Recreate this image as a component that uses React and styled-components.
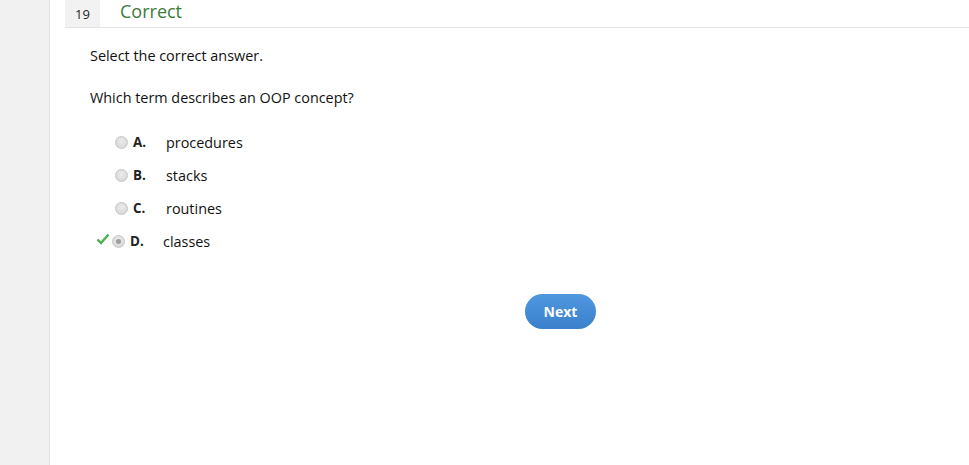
import styled, { createGlobalStyle } from "styled-components";

const Global = createGlobalStyle`
  html, body {
    margin: 0;
    padding: 0;
    background: #fff;
    font-family: "Open Sans", "Noto Sans", sans-serif;
    color: #111;
  }
`;

const Page = styled.div`
  display: flex;
  width: 969px;
  height: 465px;
  overflow: hidden;
`;

const Sidebar = styled.div`
  width: 49px;
  flex-shrink: 0;
  background: #f1f1f1;
  border-right: 1px solid #e2e2e2;
`;

const Main = styled.div`
  flex: 1;
  padding-left: 15px;
`;

const Header = styled.div`
  display: flex;
  align-items: center;
  height: 27px;
  border-bottom: 1px solid #e4e4e4;
`;

const Number = styled.div`
  width: 35px;
  height: 100%;
  background: #f2f2f2;
  display: flex;
  align-items: center;
  justify-content: center;
  font-size: 13px;
  color: #222;
`;

const Status = styled.div`
  margin-left: 20px;
  font-size: 18px;
  color: #3d7a3b;
  line-height: 1;
  padding-bottom: 6px;
`;

const Body = styled.div`
  padding: 18px 0 0 25px;
`;

const Text = styled.p`
  margin: 0 0 22px;
  font-size: 14.4px;
  line-height: 20px;
`;

const Options = styled.div`
  display: flex;
  flex-direction: column;
  gap: 13px;
  margin-top: 24px;
  padding-left: ${p => p.$pad}px;
`;

const Option = styled.div`
  display: flex;
  align-items: center;
  height: 20px;
  margin-left: ${p => (p.$checked ? -3 : 0)}px;
`;

const Mark = styled.span`
  width: 16px;
  margin-left: -16px;
  display: flex;
  align-items: center;
  margin-top: -5px;
`;

const Radio = styled.span`
  width: 13px;
  height: 13px;
  border-radius: 50%;
  background: radial-gradient(circle at 50% 40%, #ececec, #d2d2d2);
  border: 1px solid #c6c6c6;
  box-sizing: border-box;
  position: relative;
  &::after {
    content: "";
    display: ${p => (p.$on ? "block" : "none")};
    position: absolute;
    left: 3px;
    top: 3px;
    width: 5px;
    height: 5px;
    border-radius: 50%;
    background: #9d9d9d;
  }
`;

const Letter = styled.span`
  width: 33px;
  margin-left: 5px;
  font-size: 13.4px;
  font-weight: 700;
  color: #222;
`;

const Answer = styled.span`
  font-size: 14.4px;
`;

const Footer = styled.div`
  display: flex;
  margin-top: 43px;
  padding-left: 435px;
`;

const NextButton = styled.button`
  width: 71px;
  height: 35px;
  border: none;
  border-radius: 18px;
  background: linear-gradient(#4f97df, #3a80cc);
  color: #fff;
  font-family: "Open Sans", "Noto Sans", sans-serif;
  font-size: 14px;
  font-weight: 700;
  cursor: pointer;
`;

const options = [
  { letter: "A.", text: "procedures" },
  { letter: "B.", text: "stacks" },
  { letter: "C.", text: "routines" },
  { letter: "D.", text: "classes", checked: true },
];

const Check = () => (
  <svg width="14" height="12" viewBox="0 0 14 12">
    <path d="M1.5 6.5 L5 10 L12.5 1.5" fill="none" stroke="#4caf50" strokeWidth="2.4" />
  </svg>
);

export default function App() {
  return (
    <Page>
      <Global />
      <Sidebar />
      <Main>
        <Header>
          <Number>19</Number>
          <Status>Correct</Status>
        </Header>
        <Body>
          <Text>Select the correct answer.</Text>
          <Text>Which term describes an OOP concept?</Text>
          <Options $pad={25}>
            {options.map(o => (
              <Option key={o.letter} $checked={o.checked}>
                {o.checked && (
                  <Mark>
                    <Check />
                  </Mark>
                )}
                <Radio $on={o.checked} />
                <Letter>{o.letter}</Letter>
                <Answer>{o.text}</Answer>
              </Option>
            ))}
          </Options>
          <Footer>
            <NextButton>Next</NextButton>
          </Footer>
        </Body>
      </Main>
    </Page>
  );
}
